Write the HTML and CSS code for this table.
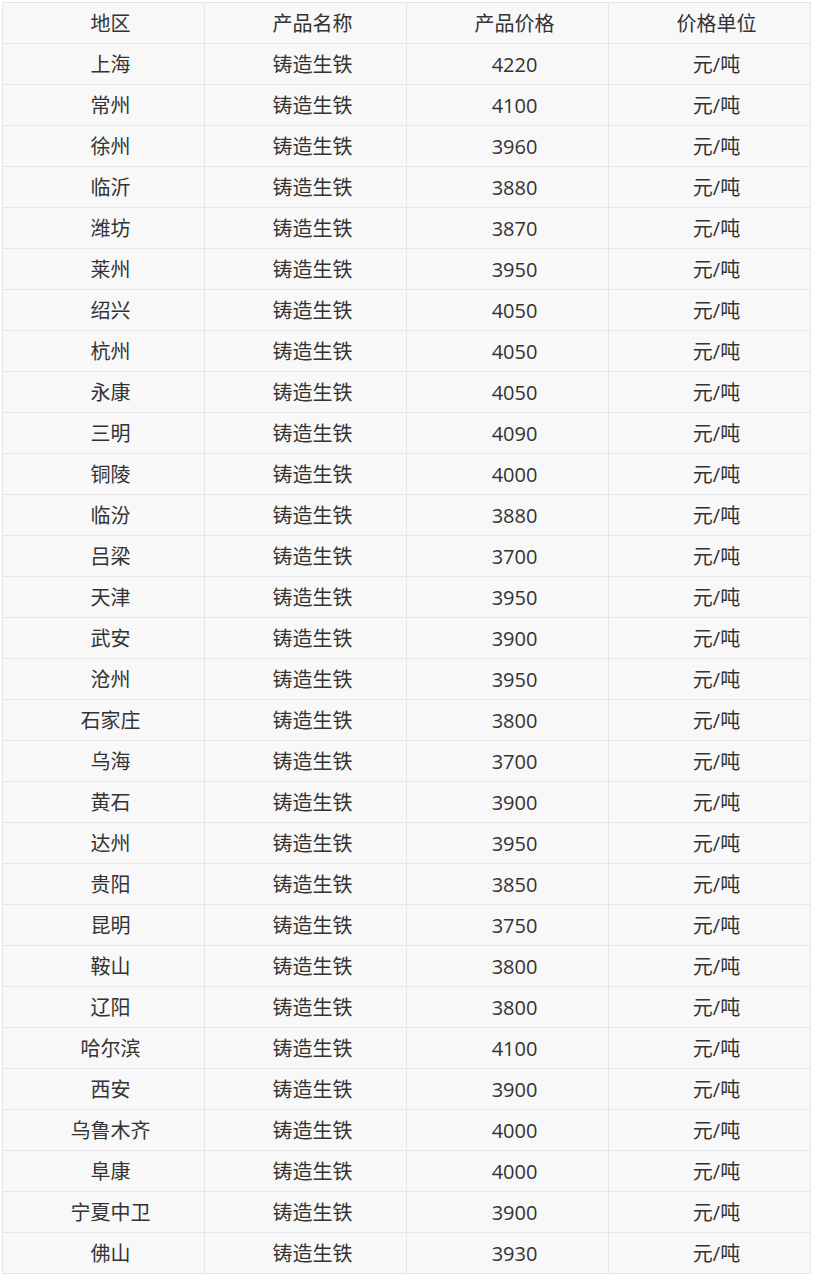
FILE: index.html
```html
<!DOCTYPE html>
<html lang="zh">
<head>
<meta charset="utf-8">
<link rel="stylesheet" href="styles.css">
</head>
<body>
<table class="price-table">
<thead>
<tr><th>地区</th><th>产品名称</th><th>产品价格</th><th>价格单位</th></tr>
</thead>
<tbody>
<tr><td>上海</td><td>铸造生铁</td><td>4220</td><td>元/吨</td></tr>
<tr><td>常州</td><td>铸造生铁</td><td>4100</td><td>元/吨</td></tr>
<tr><td>徐州</td><td>铸造生铁</td><td>3960</td><td>元/吨</td></tr>
<tr><td>临沂</td><td>铸造生铁</td><td>3880</td><td>元/吨</td></tr>
<tr><td>潍坊</td><td>铸造生铁</td><td>3870</td><td>元/吨</td></tr>
<tr><td>莱州</td><td>铸造生铁</td><td>3950</td><td>元/吨</td></tr>
<tr><td>绍兴</td><td>铸造生铁</td><td>4050</td><td>元/吨</td></tr>
<tr><td>杭州</td><td>铸造生铁</td><td>4050</td><td>元/吨</td></tr>
<tr><td>永康</td><td>铸造生铁</td><td>4050</td><td>元/吨</td></tr>
<tr><td>三明</td><td>铸造生铁</td><td>4090</td><td>元/吨</td></tr>
<tr><td>铜陵</td><td>铸造生铁</td><td>4000</td><td>元/吨</td></tr>
<tr><td>临汾</td><td>铸造生铁</td><td>3880</td><td>元/吨</td></tr>
<tr><td>吕梁</td><td>铸造生铁</td><td>3700</td><td>元/吨</td></tr>
<tr><td>天津</td><td>铸造生铁</td><td>3950</td><td>元/吨</td></tr>
<tr><td>武安</td><td>铸造生铁</td><td>3900</td><td>元/吨</td></tr>
<tr><td>沧州</td><td>铸造生铁</td><td>3950</td><td>元/吨</td></tr>
<tr><td>石家庄</td><td>铸造生铁</td><td>3800</td><td>元/吨</td></tr>
<tr><td>乌海</td><td>铸造生铁</td><td>3700</td><td>元/吨</td></tr>
<tr><td>黄石</td><td>铸造生铁</td><td>3900</td><td>元/吨</td></tr>
<tr><td>达州</td><td>铸造生铁</td><td>3950</td><td>元/吨</td></tr>
<tr><td>贵阳</td><td>铸造生铁</td><td>3850</td><td>元/吨</td></tr>
<tr><td>昆明</td><td>铸造生铁</td><td>3750</td><td>元/吨</td></tr>
<tr><td>鞍山</td><td>铸造生铁</td><td>3800</td><td>元/吨</td></tr>
<tr><td>辽阳</td><td>铸造生铁</td><td>3800</td><td>元/吨</td></tr>
<tr><td>哈尔滨</td><td>铸造生铁</td><td>4100</td><td>元/吨</td></tr>
<tr><td>西安</td><td>铸造生铁</td><td>3900</td><td>元/吨</td></tr>
<tr><td>乌鲁木齐</td><td>铸造生铁</td><td>4000</td><td>元/吨</td></tr>
<tr><td>阜康</td><td>铸造生铁</td><td>4000</td><td>元/吨</td></tr>
<tr><td>宁夏中卫</td><td>铸造生铁</td><td>3900</td><td>元/吨</td></tr>
<tr><td>佛山</td><td>铸造生铁</td><td>3930</td><td>元/吨</td></tr>
</tbody>
</table>
</body>
</html>
```
FILE: styles.css
```css
html, body {
  background: #ffffff;
}
body {
  margin: 2px;
  font-family: "Open Sans", "Noto Sans CJK SC", sans-serif;
  color: #333333;
}
.price-table {
  width: 809px;
  border-collapse: collapse;
  table-layout: fixed;
  background: #f8f8f8;
}
.price-table th,
.price-table td {
  border: 1px solid #e6e6e6;
  height: 38px;
  padding: 2px 0 0 14px;
  text-align: center;
  vertical-align: middle;
  font-size: 20px;
  font-weight: normal;
  line-height: 24px;
}
```
